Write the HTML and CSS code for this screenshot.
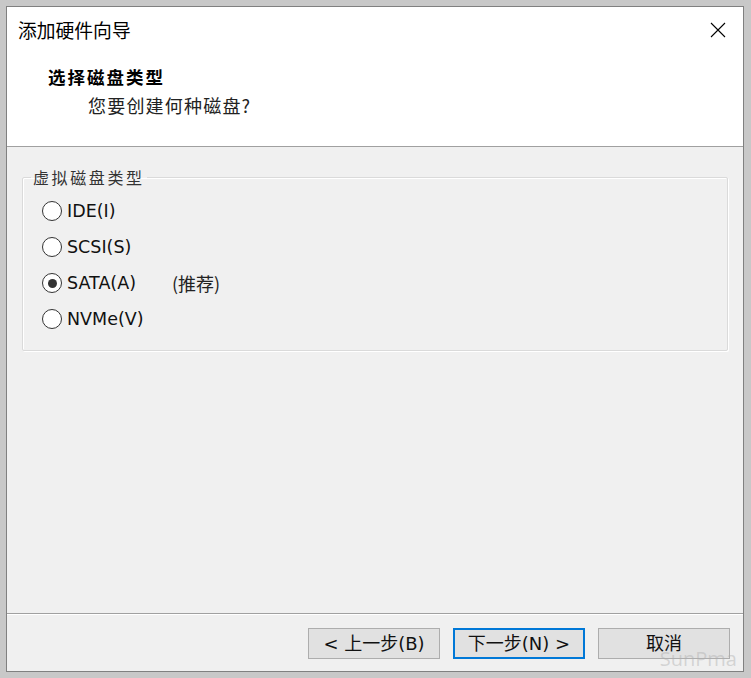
FILE: index.html
```html
<!DOCTYPE html>
<html lang="zh">
<head>
<meta charset="utf-8">
<link rel="stylesheet" href="styles.css">
</head>
<body>
<div class="window">
  <div class="header">
    <div class="titlebar">
      <span class="title">添加硬件向导</span>
      <span class="close" aria-label="关闭">
        <svg width="16" height="16" viewBox="0 0 16 16"><path d="M1 1 L15 15 M15 1 L1 15" stroke="#000" stroke-width="1.1" fill="none"/></svg>
      </span>
    </div>
    <div class="heading">选择磁盘类型</div>
    <div class="subheading">您要创建何种磁盘?</div>
  </div>
  <div class="content">
    <fieldset class="group">
      <legend>虚拟磁盘类型</legend>
      <div class="option"><span class="radio"></span><span class="label">IDE(I)</span></div>
      <div class="option"><span class="radio"></span><span class="label">SCSI(S)</span></div>
      <div class="option"><span class="radio checked"></span><span class="label wide">SATA(A)</span><span class="note">(推荐)</span></div>
      <div class="option"><span class="radio"></span><span class="label">NVMe(V)</span></div>
    </fieldset>
  </div>
  <div class="footer">
    <button class="btn">&lt; 上一步(B)</button>
    <button class="btn default">下一步(N) &gt;</button>
    <button class="btn">取消</button>
  </div>
  <div class="watermark">SunPma</div>
</div>
</body>
</html>
```

FILE: styles.css
```css
* { box-sizing: border-box; }
html, body { margin: 0; padding: 0; }
body {
  width: 751px;
  height: 678px;
  background: #c8c8c8;
  padding: 6px 7px 6px 6px;
  font-family: "DejaVu Sans", "Noto Sans CJK SC", sans-serif;
  color: #111;
}
.window {
  width: 738px;
  height: 666px;
  border: 1px solid #808080;
  display: flex;
  flex-direction: column;
  position: relative;
  background: #f0f0f0;
}
.header {
  background: #fff;
  height: 140px;
  border-bottom: 1px solid #a0a0a0;
  flex: none;
}
.titlebar {
  height: 46px;
  display: flex;
  align-items: center;
  justify-content: space-between;
  padding: 0 17px 0 11px;
}
.title {
  font-family: "Noto Sans CJK SC", sans-serif;
  font-size: 18.8px;
  color: #000;
  line-height: 24px;
}
.close { display: flex; width: 16px; height: 16px; }
.heading {
  margin-top: 13px;
  padding-left: 41px;
  font-family: "Noto Sans CJK SC", sans-serif;
  font-weight: bold;
  font-size: 17.5px;
  letter-spacing: 2px;
  line-height: 22px;
  color: #000;
}
.subheading {
  margin-top: 6px;
  padding-left: 81px;
  font-family: "Noto Sans CJK SC", sans-serif;
  font-size: 18px;
  letter-spacing: 1.2px;
  line-height: 22px;
  color: #222;
}
.content {
  flex: 1;
  padding: 20px 15px 0 15px;
}
.group {
  margin: 0;
  border: 1px solid #dadada;
  box-shadow: 1px 1px 0 #fff, inset 1px 1px 0 #fff;
  padding: 6px 0 13px 0;
  border-radius: 2px;
}
.group legend {
  margin-left: 8px;
  padding: 0 2px;
  font-family: "Noto Sans CJK SC", sans-serif;
  font-size: 16px;
  letter-spacing: 2.6px;
  line-height: 20px;
  color: #333;
}
.option {
  height: 36px;
  display: flex;
  align-items: center;
  padding-left: 19px;
}
.radio {
  width: 20px;
  height: 20px;
  border: 1px solid #333;
  border-radius: 50%;
  background: #fff;
  display: flex;
  align-items: center;
  justify-content: center;
  margin-right: 5px;
}
.radio.checked::after {
  content: "";
  width: 9px;
  height: 9px;
  border-radius: 50%;
  background: #333;
}
.label {
  font-size: 17.5px;
  color: #111;
}
.label.wide { width: 105px; }
.note {
  font-family: "Noto Sans CJK SC", sans-serif;
  font-size: 18px;
  color: #222;
}
.footer {
  flex: none;
  border-top: 1px solid #a0a0a0;
  box-shadow: inset 0 1px 0 #fff;
  padding: 14px 13px 12px 0;
  display: flex;
  justify-content: flex-end;
  gap: 13px;
}
.btn {
  width: 132px;
  height: 31px;
  background: #e1e1e1;
  border: 1px solid #adadad;
  font-family: "DejaVu Sans", "Noto Sans CJK SC", sans-serif;
  font-size: 18px;
  color: #111;
  padding: 0;
  line-height: 27px;
}
.btn.default {
  border: 2px solid #0078d7;
}
.watermark {
  position: absolute;
  right: 6px;
  bottom: 1px;
  font-family: "Open Sans", sans-serif;
  font-size: 20px;
  line-height: 22px;
  color: rgba(175, 175, 175, 0.45);
  pointer-events: none;
}
```
